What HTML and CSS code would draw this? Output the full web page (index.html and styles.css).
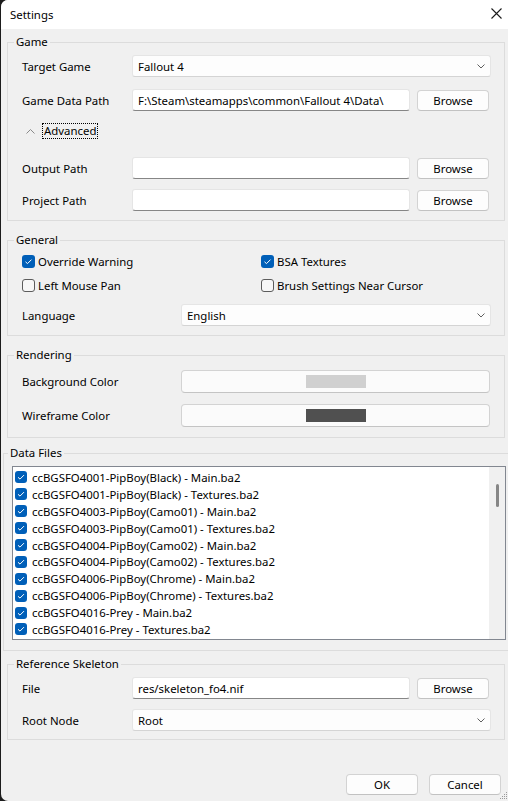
FILE: index.html
```html
<!DOCTYPE html>
<html lang="en">
<head>
    <meta charset="UTF-8">
    <title>Settings</title>
    <link rel="stylesheet" href="styles.css">
</head>
<body>

<div class="window">
    <div class="titlebar">
        <span>Settings</span>
        <svg class="close" width="11" height="11" viewBox="0 0 11 11"><path d="M0.5 0.5 L10.5 10.5 M10.5 0.5 L0.5 10.5" stroke="#1b1b1b" stroke-width="1.1" fill="none"/></svg>
    </div>

    <div class="content">
        <!-- Game -->
        <fieldset class="group game">
            <legend>Game</legend>
            <div class="row first">
                <label class="lbl">Target Game</label>
                <div class="combo">Fallout 4<svg width="8" height="5" viewBox="0 0 8 5"><polyline points="0.5,0.5 4,4 7.5,0.5" stroke="#5f5f5f" fill="none"/></svg></div>
            </div>
            <div class="row gap12">
                <label class="lbl">Game Data Path</label>
                <div class="field">F:\Steam\steamapps\common\Fallout 4\Data\</div>
                <button class="btn">Browse</button>
            </div>
            <div class="advanced">
                <svg width="9" height="5" viewBox="0 0 9 5"><polyline points="0.5,4.5 4.5,0.5 8.5,4.5" stroke="#8a8a8a" fill="none"/></svg>
                <span class="focus">Advanced</span>
            </div>
            <div class="row gap18">
                <label class="lbl">Output Path</label>
                <div class="field"></div>
                <button class="btn">Browse</button>
            </div>
            <div class="row">
                <label class="lbl">Project Path</label>
                <div class="field"></div>
                <button class="btn">Browse</button>
            </div>
        </fieldset>

        <!-- General -->
        <fieldset class="group general">
            <legend>General</legend>
            <div class="checks">
                <div class="check"><span class="box on"><svg width="13" height="13" viewBox="0 0 13 13"><polyline points="3.5,6.8 5.5,8.6 9.5,4.6" stroke="#fff" fill="none"/></svg></span>Override Warning</div>
                <div class="check"><span class="box on"><svg width="13" height="13" viewBox="0 0 13 13"><polyline points="3.5,6.8 5.5,8.6 9.5,4.6" stroke="#fff" fill="none"/></svg></span>BSA Textures</div>
                <div class="check"><span class="box"></span>Left Mouse Pan</div>
                <div class="check"><span class="box"></span>Brush Settings Near Cursor</div>
            </div>
            <div class="row wide gap11">
                <label class="lbl">Language</label>
                <div class="combo">English<svg width="8" height="5" viewBox="0 0 8 5"><polyline points="0.5,0.5 4,4 7.5,0.5" stroke="#5f5f5f" fill="none"/></svg></div>
            </div>
        </fieldset>

        <!-- Rendering -->
        <fieldset class="group rendering">
            <legend>Rendering</legend>
            <div class="row wide first">
                <label class="lbl">Background Color</label>
                <button class="color-btn"><span class="swatch" style="background:#d0d0d0"></span></button>
            </div>
            <div class="row wide gap12">
                <label class="lbl">Wireframe Color</label>
                <button class="color-btn"><span class="swatch" style="background:#505050"></span></button>
            </div>
        </fieldset>

        <!-- Data Files -->
        <fieldset class="group datafiles">
            <legend>Data Files</legend>
            <div class="listbox">
                <div class="items" id="items"></div>
                <div class="scroll"><div class="thumb"></div></div>
            </div>
        </fieldset>

        <!-- Reference Skeleton -->
        <fieldset class="group skeleton">
            <legend>Reference Skeleton</legend>
            <div class="row first">
                <label class="lbl">File</label>
                <div class="field">res/skeleton_fo4.nif</div>
                <button class="btn">Browse</button>
            </div>
            <div class="row">
                <label class="lbl">Root Node</label>
                <div class="combo">Root<svg width="8" height="5" viewBox="0 0 8 5"><polyline points="0.5,0.5 4,4 7.5,0.5" stroke="#5f5f5f" fill="none"/></svg></div>
            </div>
        </fieldset>
    </div>

    <div class="footer">
        <button class="btn dlg">OK</button>
        <button class="btn dlg">Cancel</button>
    </div>

    <svg class="grip" width="8" height="8" viewBox="0 0 8 8" fill="#9a9a9a">
        <rect x="6" y="0" width="1" height="1"/>
        <rect x="4" y="2" width="1" height="1"/><rect x="6" y="2" width="1" height="1"/>
        <rect x="2" y="4" width="1" height="1"/><rect x="4" y="4" width="1" height="1"/><rect x="6" y="4" width="1" height="1"/>
        <rect x="0" y="6" width="1" height="1"/><rect x="2" y="6" width="1" height="1"/><rect x="4" y="6" width="1" height="1"/><rect x="6" y="6" width="1" height="1"/>
    </svg>
</div>

<script>
    // fill the data file list
    const files = [
        'ccBGSFO4001-PipBoy(Black) - Main.ba2',
        'ccBGSFO4001-PipBoy(Black) - Textures.ba2',
        'ccBGSFO4003-PipBoy(Camo01) - Main.ba2',
        'ccBGSFO4003-PipBoy(Camo01) - Textures.ba2',
        'ccBGSFO4004-PipBoy(Camo02) - Main.ba2',
        'ccBGSFO4004-PipBoy(Camo02) - Textures.ba2',
        'ccBGSFO4006-PipBoy(Chrome) - Main.ba2',
        'ccBGSFO4006-PipBoy(Chrome) - Textures.ba2',
        'ccBGSFO4016-Prey - Main.ba2',
        'ccBGSFO4016-Prey - Textures.ba2'
    ];
    const list = document.getElementById('items');
    files.forEach(name => {
        const item = document.createElement('div');
        item.className = 'item';
        item.innerHTML = '<span class="box on small"><svg width="12" height="12" viewBox="0 0 12 12"><polyline points="3,6.3 5,8.1 9,4.1" stroke="#fff" fill="none"/></svg></span>';
        item.appendChild(document.createTextNode(name));
        list.appendChild(item);
    });
</script>

</body>
</html>
```

FILE: styles.css
```css
/* Window */
body {
    margin: 0;
    background-color: #1c1c1c;
    font-family: 'Noto Sans', sans-serif;
    font-size: 11.4px;
    color: #000;
    overflow: hidden;
}

.window {
    position: relative;
    margin-left: 1px;
    height: 801px;
    background-color: #f0f0f0;
    border-radius: 7px 0 0 7px;
    display: flex;
    flex-direction: column;
    overflow: hidden;
}

.titlebar {
    height: 29px;
    flex: none;
    background-color: #fff;
    display: flex;
    align-items: center;
    justify-content: space-between;
    padding: 0 6px 0 9px;
}

.titlebar span {
    margin-top: -1px;
}

.close {
    margin-top: -2px;
}

.content {
    padding: 5px 3px 0 6px;
}

/* Group boxes */
.group {
    margin: 0;
    padding: 0 13px 8px 14px;
    border: 1px solid #dcdcdc;
    min-width: 0;
}

.group legend {
    padding: 0 2px;
    margin-left: -8px;
    line-height: 16px;
}

.game {
    padding-bottom: 9px;
}

.general {
    margin-top: 11px;
    padding-bottom: 9px;
}

.rendering {
    margin-top: 11px;
    padding-bottom: 11px;
}

.datafiles {
    margin: 7px -4px 0 -4px;
    padding: 0 3px 10px 8px;
    border-right: none;
}

.datafiles legend {
    margin-left: -4px;
}

.skeleton {
    margin-top: 5px;
}

/* Rows */
.row {
    display: flex;
    align-items: center;
    height: 22px;
    margin-top: 10px;
}

.row.first {
    margin-top: 5px;
}

.rendering .row.first {
    margin-top: 7px;
}

.row.gap11 {
    margin-top: 11px;
}

.row.gap12 {
    margin-top: 12px;
}

.row.gap18 {
    margin-top: 18px;
}

.lbl {
    width: 110px;
    flex: none;
}

.wide .lbl {
    width: 159px;
}

.combo,
.field {
    box-sizing: border-box;
    height: 22px;
    border: 1px solid #e5e5e5;
    border-radius: 3px;
    background-color: #fdfdfd;
    display: flex;
    align-items: center;
    padding-left: 5px;
}

.combo {
    flex: 1;
    justify-content: space-between;
    padding-right: 5px;
    border-bottom-color: #d4d4d4;
}

.field {
    width: 278px;
    flex: none;
    background-color: #fff;
    border-bottom-color: #868686;
}

.btn {
    font-family: inherit;
    font-size: inherit;
    color: #000;
    box-sizing: border-box;
    width: 72px;
    height: 21px;
    margin-left: 7px;
    padding: 0;
    background-color: #fdfdfd;
    border: 1px solid #d3d3d3;
    border-bottom-color: #c2c2c2;
    border-radius: 4px;
}

.color-btn {
    flex: 1;
    height: 23px;
    margin-right: 1px;
    padding: 0;
    background-color: #fbfbfb;
    border: 1px solid #d3d3d3;
    border-bottom-color: #c4c4c4;
    border-radius: 4px;
    display: flex;
    align-items: center;
    justify-content: center;
}

.swatch {
    width: 60px;
    height: 13px;
}

/* Advanced toggle */
.advanced {
    display: flex;
    align-items: center;
    height: 16px;
    margin-top: 12px;
    padding-left: 4px;
}

.advanced svg {
    margin-right: 7px;
}

.focus {
    border: 1px dotted #000;
    padding: 0 1px;
    line-height: 14px;
}

/* Checkboxes */
.checks {
    display: grid;
    grid-template-columns: 239px 1fr;
    row-gap: 8px;
    margin-top: 5px;
}

.check {
    display: flex;
    align-items: center;
    height: 16px;
}

.box {
    box-sizing: border-box;
    width: 13px;
    height: 13px;
    flex: none;
    margin-right: 3px;
    border: 1px solid #5c5c5c;
    border-radius: 3px;
    background-color: #f7f7f7;
}

.box.on {
    border: none;
    background-color: #005fb8;
}

.box svg {
    display: block;
}

.box.small {
    width: 12px;
    height: 12px;
    margin-right: 5px;
}

/* Data file list */
.listbox {
    box-sizing: border-box;
    height: 174px;
    margin-top: 5px;
    border: 1px solid #828790;
    background-color: #fff;
    display: flex;
    overflow: hidden;
}

.items {
    flex: 1;
    padding: 2px 0 0 2px;
}

.item {
    display: flex;
    align-items: center;
    height: 16.9px;
    white-space: nowrap;
}

.scroll {
    width: 16px;
    flex: none;
    background-color: #f0f0f0;
    padding-top: 17px;
}

.thumb {
    width: 3px;
    height: 23px;
    margin-left: 7px;
    border-radius: 2px;
    background-color: #868686;
}

/* Footer */
.footer {
    display: flex;
    justify-content: flex-end;
    margin-top: 34px;
    padding-right: 7px;
}

.footer .btn {
    margin-left: 11px;
}

.grip {
    position: absolute;
    right: 0;
    bottom: 1px;
}
```
